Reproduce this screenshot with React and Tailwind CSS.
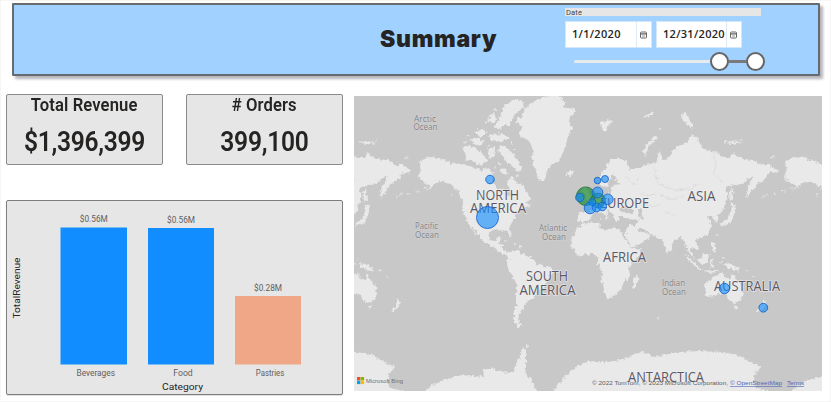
import React from "react";

const LAND = [
  // North America
  "M418 177L421 170 419 163 422 160 430 157 438 158 447 161 457 165 465 164 472 168 483 170 489 168 493 173 492 182 497 188 505 190 507 198 509 198 510 190 508 183 510 177 515 179 518 185 522 183 526 190 528 195 531 199 524 203 532 204 528 208 523 206 518 211 515 217 511 223 509 229 512 237 510 238 507 231 502 231 498 229 494 230 490 231 488 236 490 241 495 242 497 238 501 237 500 241 498 245 503 246 503 250 507 253 505 255 499 251 492 246 484 242 480 236 474 228 472 228 477 236 474 233 469 224 465 217 462 210 463 200 460 196 458 190 452 185 443 181 438 182 433 186 425 191 431 186 425 183 421 180Z",
  // South America
  "M506 254L510 252 518 251 522 254 528 255 533 259 536 264 544 266 550 267 553 271 549 276 547 282 544 288 538 290 535 294 532 299 528 301 525 305 523 309 521 313 518 316 519 323 523 327 518 327 515 323 514 316 516 306 516 297 517 285 513 277 507 268 507 261 509 258Z",
  // Greenland
  "M515 122L522 115 526 107 534 102 544 97 553 95 560 97 566 103 563 107 572 108 575 111 569 120 573 128 568 136 566 144 563 154 558 162 551 165 547 170 545 181 540 181 537 174 535 168 532 160 533 148 529 141 521 136 518 133 523 128Z",
  // Ellesmere and Baffin
  "M507 104L515 99 522 101 525 106 518 111 513 117 510 125 503 125 501 129 494 127 499 120 502 110Z",
  "M488 118L494 113 497 120 491 124ZM474 133L482 129 487 132 480 137ZM489 135L504 134 509 138 502 142 492 141Z",
  "M500 145L507 147 513 154 518 160 522 168 518 172 512 166 507 163 504 157 498 151Z",
  "M462 147L470 145 482 153 488 160 480 165 472 161 466 160 464 153ZM469 140L478 138 484 142 478 146ZM488 149L494 147 495 156 490 158ZM500 169L506 168 508 173 503 175Z",
  "M566 174L568 171 573 171 573 174 569 177Z",
  // Africa
  "M577 228L583 224 596 222 599 223 600 228 608 230 612 227 620 229 623 236 628 244 632 249 642 248 640 254 634 261 629 268 630 276 624 282 621 289 616 295 608 298 605 294 603 284 601 278 603 271 598 264 598 258 594 254 586 254 578 256 572 248 571 241 574 233Z",
  "M633 280L638 274 639 278 636 287 633 287Z",
  // Europe and Asia
  "M604 197L597 196 595 201 588 202 591 209 590 212 579 212 578 221 585 222 590 219 592 214 598 212 603 214 610 220 607 213 605 209 611 212 616 222 620 221 618 216 623 216 626 219 638 220 636 225 628 225 625 235 632 248 640 244 650 237 647 233 641 232 637 229 643 229 650 234 658 237 663 240 667 253 671 250 672 244 679 237 683 240 686 247 690 254 694 259 691 250 692 247 697 250 699 246 695 240 702 238 708 234 711 227 709 219 707 216 713 216 716 223 718 216 723 210 726 202 728 196 725 188 733 185 742 184 748 179 754 176 748 186 746 198 753 190 757 184 766 178 768 173 778 172 770 165 762 165 753 160 743 159 733 153 731 158 723 158 718 153 702 148 698 139 692 134 688 142 680 145 673 150 670 157 663 161 659 151 657 162 645 165 640 168 633 168 629 172 628 162 618 158 612 159 606 167 600 177 601 185 606 188 610 180 613 173 615 178 619 184 612 187 612 192 607 194Z",
  "M583 199L586 196 583 190 585 186 589 193 593 197 590 200Z",
  // Arctic islands
  "M600 123L607 120 613 122 608 127 606 133 601 128ZM645 158L643 152 647 143 657 136 657 139 649 145 646 153ZM682 114L686 113 690 121 694 128 689 126 683 121ZM727 142L733 140 740 143 733 145ZM646 114L654 112 652 116 644 117Z",
  // Japan, Southeast Asia
  "M720 224L727 220 731 212 732 203 736 205 734 214 731 222 723 226ZM729 192L732 187 733 200 730 203ZM685 254L689 257 696 264 703 270 699 270 692 264ZM698 260L704 254 709 255 707 264 701 264ZM710 260L714 258 712 263 714 267 711 268ZM712 242L714 242 716 252 712 250ZM703 270L712 271 720 271 711 273ZM725 263L731 264 738 268 740 272 733 270 728 268ZM672 253L674 256 672 257Z",
  // Australia, Tasmania, New Zealand
  "M704 284L711 279 717 275 724 273 726 278 731 280 733 273 736 279 742 287 743 293 741 300 734 303 729 300 727 295 722 293 714 296 707 297 705 291ZM734 306L738 306 736 310ZM763 299L767 302 764 307 757 313 756 311 763 305Z",
  // Antarctica
  "M548 402L553 391 560 382 567 374 578 366 590 361 610 362 627 358 634 354 643 352 653 357 665 355 680 352 700 351 723 352 738 355 750 362 761 367 756 372 754 379 755 387 768 391 768 402Z",
  "M425 402L425 391 437 383 447 379 460 375 474 376 484 377 483 369 492 368 500 372 512 373 517 362 521 355 522 347 526 350 526 374 532 381 537 391 540 402Z",
].join("");

const WATER =
  "M619 208L625 206 632 209 635 213 627 213 620 212ZM638 209L641 208 643 212 641 214 644 219 640 220 639 215Z";

const SPECKS = [
  [467, 135], [476, 127], [485, 122], [494, 109], [497, 131], [463, 142], [487, 145], [510, 143],
  [513, 148], [498, 163], [493, 166], [516, 175], [363, 141], [373, 142], [405, 156], [506, 240],
  [514, 243], [519, 246], [499, 236], [605, 218], [600, 217], [716, 234], [723, 257], [719, 262],
  [745, 270], [752, 276], [775, 169], [770, 157], [526, 346], [657, 317], [450, 194], [454, 188],
  [396, 196], [408, 193], [416, 190], [424, 187], [400, 194], [659, 128], [725, 141], [740, 139],
];

const COUNTRY =
  "M654 165L657 182 665 187 675 190 690 189 700 183M713 152L716 163 713 173 722 181M660 195L672 200 684 196M662 211L676 215M626 178L634 184 640 178M640 193L648 196 656 193M644 204L654 207 661 204";

const LABELS = [
  ["NORTH", 476, 199.5, 43], ["AMERICA", 470, 213.3, 56], ["SOUTH", 526, 280.8, 42], ["AMERICA", 519.5, 294.5, 56],
  ["EUROPE", 600, 207.5, 49], ["ASIA", 687.5, 200.5, 28], ["AFRICA", 603, 262, 43],
  ["AUSTRALIA", 714, 291, 66], ["ANTARCTICA", 628, 382, 76],
];

const OCEANS = [
  ["Arctic", 414, 121.5, 22], ["Ocean", 413.5, 130, 24], ["Pacific", 415, 229, 23], ["Ocean", 415, 237.5, 24],
  ["Atlantic", 539, 231, 28], ["Ocean", 542, 239.5, 24], ["Indian", 662, 286, 23], ["Ocean", 662, 294.5, 24],
];

const BUBBLES = [
  [490, 179.5, 4.3], [487.5, 217.5, 11], [585.8, 196.2, 9.3, "g"], [598, 200.5, 7.3, "g"], [579.8, 197.5, 4.2],
  [597.5, 192.5, 5.4], [607.8, 199.3, 5.3], [590, 208, 5.8], [592.3, 202, 3.6], [596.5, 207.5, 4.4], [602.3, 206.5, 4.3],
  [597.5, 180.5, 3.3], [605, 179, 3.5], [724.5, 288.5, 5.2], [763.3, 307.7, 4.4],
];

function WorldMap() {
  return (
    <svg className="block h-[295px] w-[468px]" viewBox="354 96 468 295">
      <defs>
        <filter id="coast" x="340" y="86" width="496" height="320" filterUnits="userSpaceOnUse">
          <feTurbulence type="fractalNoise" baseFrequency="0.3" numOctaves="2" seed="4" />
          <feDisplacementMap in="SourceGraphic" scale="5.5" xChannelSelector="R" yChannelSelector="G" />
        </filter>
        <g id="world">
          <path d={LAND} fill="#e9e9e9" />
          <path d={WATER} fill="#c8c8c8" />
          {SPECKS.map(([x, y], i) => (
            <rect key={i} x={x} y={y} width="2.5" height="1.5" fill="#e2e2e2" />
          ))}
          <path d={COUNTRY} fill="none" stroke="#d8d8d8" strokeWidth="0.8" />
        </g>
      </defs>
      <rect x="354" y="96" width="468" height="295" fill="#c8c8c8" />
      <g filter="url(#coast)">
        <use href="#world" x="-366" />
        <use href="#world" />
        <use href="#world" x="366" />
      </g>
      <g fontFamily="'Open Sans', 'Noto Sans', sans-serif" stroke="#efefef" strokeOpacity="0.7" paintOrder="stroke" strokeLinejoin="round">
        <g fontSize="13.8" fill="#5b5967" strokeWidth="1.6">
          {LABELS.map(([t, x, y, w], i) => (
            <text key={i} x={x} y={y} textLength={w} lengthAdjust="spacingAndGlyphs">{t}</text>
          ))}
        </g>
        <g fontSize="8.8" fill="#818187" strokeWidth="0.8" strokeOpacity="0.4">
          {OCEANS.map(([t, x, y, w], i) => (
            <text key={i} x={x} y={y} textLength={w} lengthAdjust="spacingAndGlyphs">{t}</text>
          ))}
        </g>
      </g>
      {BUBBLES.map(([x, y, r, g], i) => (
        <circle key={i} cx={x} cy={y} r={r} fill={g ? "#1f8a35" : "#118dff"} fillOpacity={g ? 0.72 : 0.62} stroke={g ? "#27713a" : "#1764c8"} strokeOpacity="0.85" />
      ))}
      <rect x="357" y="377" width="3.4" height="3.4" fill="#f25022" />
      <rect x="360.7" y="377" width="3.4" height="3.4" fill="#7fba00" />
      <rect x="357" y="380.7" width="3.4" height="3.4" fill="#00a4ef" />
      <rect x="360.7" y="380.7" width="3.4" height="3.4" fill="#ffb900" />
      <g fontFamily="'Liberation Sans', Arial, sans-serif" fontSize="6.2" fill="#5f5f5f">
        <text x="366" y="383" textLength="37" lengthAdjust="spacingAndGlyphs" fill="#707070">Microsoft Bing</text>
        <text x="592" y="385" textLength="136" lengthAdjust="spacingAndGlyphs">© 2022 TomTom, © 2023 Microsoft Corporation,</text>
        <text x="730" y="385" textLength="52" lengthAdjust="spacingAndGlyphs" fill="#5068b8" textDecoration="underline">© OpenStreetMap</text>
        <text x="787" y="385" textLength="17" lengthAdjust="spacingAndGlyphs" fill="#5068b8" textDecoration="underline">Terms</text>
      </g>
    </svg>
  );
}

function DateField({ value, width }) {
  return (
    <div className="flex h-[27px] border border-[#d3e7fa] bg-white" style={{ width }}>
      <div className="flex flex-1 items-center whitespace-nowrap pl-[6px] font-['Open_Sans','Noto_Sans',sans-serif] text-[11px] font-semibold tracking-[0.3px] text-[#252423]">
        {value}
      </div>
      <div className="flex w-[15px] items-center border-l border-[#dcebfa] pl-[3px]">
        <svg width="7" height="8" viewBox="0 0 7 8" fill="none" stroke="#666">
          <rect x="0.5" y="1" width="6" height="6" rx="1" />
          <path d="M0.5 2.9H6.5" strokeWidth="1.3" />
          <path d="M2 5H5" strokeWidth="0.7" />
        </svg>
      </div>
    </div>
  );
}

function Header() {
  return (
    <header className="ml-3 mt-[3px] flex h-[73px] w-[808px] rounded-[1px] border-2 border-[#666b70] bg-[#a1d1ff] shadow-[3px_3px_3px_#b4b4ba]">
      <h1 className="mt-[16px] w-[551px] whitespace-nowrap pl-[366px] font-['Inter','Liberation_Sans',sans-serif] text-[23px] font-black leading-[36px] tracking-[0.7px] text-[#252423]">
        Summary
      </h1>
      <div className="flex flex-col">
        <div className="mt-[3px] h-[8px] w-[196px] bg-[#e6e6e6] pl-[1px] font-['Roboto',sans-serif] text-[7.5px] leading-[9px] tracking-[0.15px] text-[#444]">
          Date
        </div>
        <div className="mt-[5px] flex gap-[4px]">
          <DateField value="1/1/2020" width={87} />
          <DateField value="12/31/2020" width={86} />
        </div>
        <div className="ml-[9px] mt-[4px] flex items-center">
          <div className="h-[3px] w-[136px] rounded-l bg-[#e6ebf0]" />
          <div className="size-[19px] rounded-full border-2 border-[#666] bg-white" />
          <div className="h-[3px] w-[17px] bg-[#7a7a7a]" />
          <div className="size-[19px] rounded-full border-2 border-[#666] bg-white" />
        </div>
      </div>
    </header>
  );
}

function Card({ title, value }) {
  return (
    <section className="flex h-[71px] w-[157px] flex-col items-center whitespace-nowrap rounded-[2px] border border-[#8a8a8a] bg-[#e6e6e6] font-['Roboto',sans-serif] text-[#252423]">
      <div className="h-[30px] scale-x-[0.95] text-[17.5px] font-semibold leading-[20px] tracking-[0.1px]">{title}</div>
      <div className="scale-x-[0.91] text-[27px] font-semibold leading-[34px] tracking-[-0.3px]">{value}</div>
    </section>
  );
}

const BARS = [
  ["Beverages", "$0.56M", 60.5, 66.5, 227.5, "#118dff", 38.5],
  ["Food", "$0.56M", 148, 66, 228, "#118dff", 19.5],
  ["Pastries", "$0.28M", 235, 66, 296, "#f0a788", 28.5],
];

function Chart() {
  return (
    <section className="h-[195px] w-[337px] rounded-[2px] border border-[#7d7d7d] bg-[#e6e6e6] shadow-[0_1px_1px_#ddd]">
      <svg className="block h-[193px] w-[335px]" viewBox="7 201 335 193" fontFamily="Roboto, sans-serif" fontSize="9.4" textAnchor="middle">
        {BARS.map(([name, label, x, w, y, color, tw]) => (
          <g key={name} fill="#62605e">
            <rect x={x} y={y} width={w} height={364.5 - y} fill={color} />
            <text x={x + w / 2} y={y - 5.5} textLength="28" lengthAdjust="spacingAndGlyphs">{label}</text>
            <text x={x + w / 2 + 2} y="376" textLength={tw} lengthAdjust="spacingAndGlyphs">{name}</text>
          </g>
        ))}
        <g fill="#252423" fontSize="9">
          <text x="182.5" y="389.7" textLength="41" lengthAdjust="spacingAndGlyphs">Category</text>
          <text transform="translate(20.3 288) rotate(-90)" textLength="61" lengthAdjust="spacingAndGlyphs">TotalRevenue</text>
        </g>
      </svg>
    </section>
  );
}

export default function App() {
  return (
    <div className="h-[402px] w-[831px] overflow-hidden bg-white shadow-[inset_0_0_0_1px_#f6f6f6]">
      <div className="flow-root">
        <Header />
      </div>
      <main className="flex pl-[6px] pt-[18px]">
        <div className="flex w-[348px] flex-col gap-[35px]">
          <div className="flex gap-[23px]">
            <Card title="Total Revenue" value="$1,396,399" />
            <Card title="# Orders" value="399,100" />
          </div>
          <Chart />
        </div>
        <div className="pt-[2px]">
          <WorldMap />
        </div>
      </main>
    </div>
  );
}
